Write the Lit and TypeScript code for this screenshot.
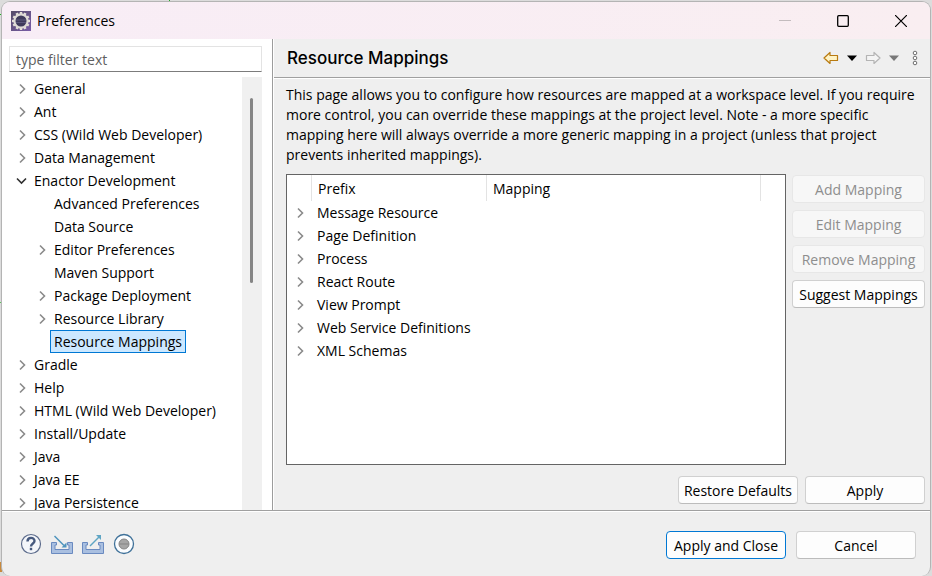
import { LitElement, html, svg, css, nothing } from "lit";
import { customElement, property } from "lit/decorators.js";
import { classMap } from "lit/directives/class-map.js";

interface Node {
  label: string;
  depth?: number;
  state?: "closed" | "open" | "leaf";
  selected?: boolean;
}

const PAGES: Node[] = [
  { label: "General" },
  { label: "Ant" },
  { label: "CSS (Wild Web Developer)" },
  { label: "Data Management" },
  { label: "Enactor Development", state: "open" },
  { label: "Advanced Preferences", depth: 1, state: "leaf" },
  { label: "Data Source", depth: 1, state: "leaf" },
  { label: "Editor Preferences", depth: 1 },
  { label: "Maven Support", depth: 1, state: "leaf" },
  { label: "Package Deployment", depth: 1 },
  { label: "Resource Library", depth: 1 },
  { label: "Resource Mappings", depth: 1, state: "leaf", selected: true },
  { label: "Gradle" },
  { label: "Help" },
  { label: "HTML (Wild Web Developer)" },
  { label: "Install/Update" },
  { label: "Java" },
  { label: "Java EE" },
  { label: "Java Persistence" },
];

const MAPPINGS = [
  "Message Resource",
  "Page Definition",
  "Process",
  "React Route",
  "View Prompt",
  "Web Service Definitions",
  "XML Schemas",
];

const closedArrow = html`<svg width="16" height="16" viewBox="0 0 16 16" fill="none" stroke="#8a8a8a" stroke-width="1.6">
  <path d="M6 3.5L10.5 8L6 12.5" />
</svg>`;
const openArrow = html`<svg width="16" height="16" viewBox="0 0 16 16" fill="none" stroke="#303030" stroke-width="1.6">
  <path d="M3 5.5L7.5 10L12 5.5" />
</svg>`;

@customElement("pref-tree")
class PrefTree extends LitElement {
  @property({ attribute: false }) nodes: Node[] = [];

  static styles = css`
    :host { display: block; flex: 1; min-width: 0; overflow: hidden; }
    .list { margin: 0; padding: 0; list-style: none; }
    .row { display: flex; align-items: center; height: 23px; padding-left: 12px; white-space: nowrap; }
    .child { padding-left: 32px; }
    .arrow { display: flex; width: 16px; }
    .label { height: 21px; line-height: 21px; padding: 0 3px; border: 1px solid transparent; }
    .selected { background: #cce8ff; border-color: #0078d4; }
  `;

  render() {
    return html`<ul class="list" role="tree">
      ${this.nodes.map(
        (n) => html`<li
          class=${classMap({ row: true, child: !!n.depth })}
          role="treeitem"
          aria-level=${(n.depth ?? 0) + 1}
          aria-selected=${n.selected ? "true" : "false"}
        >
          <span class="arrow">${n.state === "leaf" ? nothing : n.state === "open" ? openArrow : closedArrow}</span>
          <span class=${classMap({ label: true, selected: !!n.selected })}>${n.label}</span>
        </li>`
      )}
    </ul>`;
  }
}

@customElement("app-root")
class AppRoot extends LitElement {
  static styles = css`
    * { box-sizing: border-box; }
    :host {
      display: block;
      height: 100vh;
      padding: 1px 1px 0 1px;
      box-sizing: border-box;
      overflow: hidden;
      background:
        linear-gradient(#22b022, #22b022) 169px 0 / 1px 2px no-repeat,
        linear-gradient(#22b022, #22b022) 0 14px / 2px 1px no-repeat,
        linear-gradient(#5cc25c, #5cc25c) 0 302px / 2px 1px no-repeat,
        linear-gradient(#c98a3c, #c98a3c) 0 562px / 2px 10px no-repeat,
        #dcdcdc;
      color: #000;
      font-family: "Open Sans", "Noto Sans", sans-serif;
      font-size: 14px;
      line-height: 20px;
    }
    .window {
      display: flex;
      flex-direction: column;
      height: 100%;
      overflow: hidden;
      background: #efefef;
      border: 1px solid #b4b4b4;
      border-width: 1px 1px 0;
      border-radius: 9px;
    }
    button { font: inherit; color: inherit; padding: 0; white-space: nowrap; }
    .titlebar {
      display: flex;
      align-items: center;
      height: 37px;
      padding-left: 9px;
      background: linear-gradient(90deg, #f8edf6, #f9eef1);
    }
    .caption { flex: 1; margin: 0 0 0 6px; font-size: 14px; font-weight: 400; }
    .win { display: flex; align-items: center; justify-content: center; width: 58px; height: 36px; border: 0; background: none; }
    .body { display: flex; flex: 1; min-height: 0; }
    .side { display: flex; flex-direction: column; width: 271px; background: #fff; border-right: 1px solid #9c9c9c; }
    .filter {
      height: 26px;
      margin: 7px 10px 5px 7px;
      padding: 0 6px;
      border: 1px solid #e3e3e3;
      border-bottom-color: #7c7c7c;
      border-radius: 0;
      font: inherit;
      background: #fff;
    }
    .filter::placeholder { color: #5f5f5f; opacity: 1; }
    .scroller { display: flex; flex: 1; min-height: 0; }
    .track { width: 20px; margin-right: 10px; padding: 21px 8px 0; background: #f0f0f0; }
    .thumb { width: 3px; height: 185px; border-radius: 2px; background: #858585; }
    .page { display: flex; flex: 1; flex-direction: column; min-width: 0; border-left: 1px solid #fff; }
    .head {
      display: flex;
      align-items: center;
      height: 39px;
      padding: 0 5px 0 13px;
      border-bottom: 1px solid #a0a0a0;
      box-shadow: 0 1px 0 #fff;
    }
    .heading { flex: 1; margin: 0; font: 500 17px/20px Inter, sans-serif; }
    .nav { display: flex; align-items: center; }
    .tool { display: flex; justify-content: center; border: 0; background: none; }
    .nav .tool { width: 21px; }
    .intro { margin: 7px 0 9px 12px; white-space: nowrap; }
    .work { display: flex; flex: 1; gap: 6px; min-height: 0; padding: 0 5px 0 12px; }
    .grid { flex: 1; min-width: 0; border: 1px solid #646464; background: #fff; }
    .table { width: 100%; border-collapse: separate; border-spacing: 0; table-layout: fixed; }
    .table th, .table td { height: 23px; padding: 0 0 0 5px; text-align: left; font-weight: 400; white-space: nowrap; }
    .table th { height: 26px; padding: 2px 0 0 6px; border-right: 1px solid #e3e3e3; }
    .table th:last-child { border: 0; }
    .table svg { display: block; }
    .c0 { width: 25px; }
    .c1 { width: 175px; }
    .c3 { width: 24px; }
    .actions { display: flex; flex-direction: column; gap: 7px; width: 133px; padding-top: 1px; }
    .btn { height: 28px; padding-top: 2px; border: 1px solid #d0d0d0; border-bottom-color: #bcbcbc; border-radius: 4px; background: #fdfdfd; }
    .btn:disabled { color: #8e8e8e; border-color: #e7e7e7; background: #f7f7f7; }
    .wide { width: 120px; }
    .primary { border-color: #0078d4; }
    .pagefoot { display: flex; justify-content: flex-end; gap: 7px; padding: 11px 5px 6px; }
    .footer {
      display: flex;
      align-items: center;
      gap: 10px;
      height: 66px;
      padding: 2px 14px 0 18px;
      border-top: 1px solid #a0a0a0;
      box-shadow: inset 0 1px 0 #fff;
    }
    .icons { display: flex; flex: 1; gap: 9px; padding-bottom: 2px; }
  `;

  private teeth() {
    return Array.from({ length: 12 }, (_, i) => svg`<rect x="8.8" y="1" width="2.4" height="4" fill="#e6e2da" transform="rotate(${i * 30} 10 10)" />`);
  }

  render() {
    return html`
      <main class="window">
        <header class="titlebar">
          <svg width="20" height="20" viewBox="0 0 20 20">
            <defs>
              <linearGradient id="bg" x2="1" y2="1"><stop stop-color="#554b68" /><stop offset="1" stop-color="#7a5ea8" /></linearGradient>
            </defs>
            <rect width="20" height="20" fill="url(#bg)" />
            ${this.teeth()}
            <circle cx="10" cy="10" r="6.6" fill="#3f3a5c" stroke="#dedad6" stroke-width="2.2" />
            <path d="M5 9H15M5 11.5H15" stroke="#5c587c" />
          </svg>
          <h1 class="caption">Preferences</h1>
          <button class="win" aria-label="Minimize"><svg width="12" height="12" stroke="#c3bcbe"><path d="M0 5.5H12" /></svg></button>
          <button class="win" aria-label="Maximize"><svg width="12" height="12" fill="none" stroke="#000" stroke-width="1.3"><rect x=".7" y=".7" width="10.6" height="10.6" rx="1" /></svg></button>
          <button class="win" aria-label="Close"><svg width="12" height="12" stroke="#000" stroke-width="1.2"><path d="M0 0L12 12M12 0L0 12" /></svg></button>
        </header>

        <section class="body">
          <nav class="side">
            <input class="filter" type="text" placeholder="type filter text" aria-label="Filter" />
            <div class="scroller">
              <pref-tree .nodes=${PAGES}></pref-tree>
              <div class="track"><div class="thumb"></div></div>
            </div>
          </nav>

          <section class="page">
            <header class="head">
              <h2 class="heading">Resource Mappings</h2>
              <div class="nav">
                <button class="tool" aria-label="Back">
                  <svg width="16" height="14" viewBox="0 0 16 14"><path d="M1 7L7 1.500V4.500H14.500V9.500H7V12.500Z" fill="#fff3c4" stroke="#b87a10" stroke-width="1.2" stroke-linejoin="round" /></svg>
                </button>
                <button class="tool" aria-label="Back history"><svg width="10" height="6"><path d="M0 .5H10L5 6Z" fill="#000" /></svg></button>
                <button class="tool" aria-label="Forward">
                  <svg width="16" height="14" viewBox="0 0 16 14"><path d="M15 7L9 1.500V4.500H1.500V9.500H9V12.500Z" fill="#f4f4f4" stroke="#b4b4b4" stroke-width="1.2" stroke-linejoin="round" /></svg>
                </button>
                <button class="tool" aria-label="Forward history"><svg width="10" height="6"><path d="M0 .5H10L5 6Z" fill="#787878" /></svg></button>
                <button class="tool" aria-label="View menu">
                  <svg width="6" height="16" fill="#fff" stroke="#6e6e6e"><circle cx="3" cy="3" r="1.8" /><circle cx="3" cy="8" r="1.8" /><circle cx="3" cy="13" r="1.8" /></svg>
                </button>
              </div>
            </header>

            <p class="intro">
              This page allows you to configure how resources are mapped at a workspace level. If you require<br />
              more control, you can override these mappings at the project level. Note - a more specific<br />
              mapping here will always override a more generic mapping in a project (unless that project<br />
              prevents inherited mappings).
            </p>

            <div class="work">
              <div class="grid">
                <table class="table">
                  <colgroup><col class="c0" /><col class="c1" /><col /><col class="c3" /></colgroup>
                  <thead>
                    <tr><th></th><th scope="col">Prefix</th><th scope="col">Mapping</th><th></th></tr>
                  </thead>
                  <tbody>
                    ${MAPPINGS.map((m) => html`<tr><td>${closedArrow}</td><td>${m}</td><td></td><td></td></tr>`)}
                  </tbody>
                </table>
              </div>
              <div class="actions">
                <button class="btn" disabled>Add Mapping</button>
                <button class="btn" disabled>Edit Mapping</button>
                <button class="btn" disabled>Remove Mapping</button>
                <button class="btn">Suggest Mappings</button>
              </div>
            </div>

            <div class="pagefoot">
              <button class="btn wide">Restore Defaults</button>
              <button class="btn wide">Apply</button>
            </div>
          </section>
        </section>

        <footer class="footer">
          <div class="icons">
            <button class="tool" aria-label="Help">
              <svg width="22" height="22" viewBox="0 0 22 22" fill="none"><circle cx="11" cy="11" r="9.5" fill="#f4f6fa" stroke="#5d6c8c" stroke-width="1.2" /><path d="M7.500 8.500C7.500 3.800 14.500 3.800 14.500 8C14.500 10.500 11 10.500 11 13.500" stroke="#46597e" stroke-width="2.4" /><rect x="9.8" y="14.8" width="2.4" height="2.4" fill="#46597e" /></svg>
            </button>
            <button class="tool" aria-label="Import">
              <svg width="22" height="22" viewBox="0 0 22 22" fill="none"><path d="M.5 9.500H5.500V12H4V16.500H18V12H16.500V9.500H21.500V20.500H.5Z" fill="#a9bfe0" stroke="#6a8ac0" /><path d="M3.500 3L13 12.500" stroke="#4f94bd" stroke-width="1.5" /><path d="M15.500 14.500V9.500L10.500 14.500Z" fill="#4f94bd" /></svg>
            </button>
            <button class="tool" aria-label="Export">
              <svg width="22" height="22" viewBox="0 0 22 22" fill="none"><path d="M.5 9.500H5.500V12H4V16.500H18V12H16.500V9.500H21.500V20.500H.5Z" fill="#a9bfe0" stroke="#6a8ac0" /><path d="M8 13L17 4" stroke="#5fa5c4" stroke-width="1.5" /><path d="M19 2V7L14 2Z" fill="#5fa5c4" /></svg>
            </button>
            <button class="tool" aria-label="Record">
              <svg width="22" height="22" viewBox="0 0 22 22"><circle cx="11" cy="11" r="9.5" fill="#fafcfe" stroke="#3f7199" stroke-width="1.3" /><circle cx="11" cy="11" r="5" fill="#a6a6a6" stroke="#858585" /><path d="M6.500 11H15.500" stroke="#858585" /></svg>
            </button>
          </div>
          <button class="btn wide primary">Apply and Close</button>
          <button class="btn wide">Cancel</button>
        </footer>
      </main>
    `;
  }
}
